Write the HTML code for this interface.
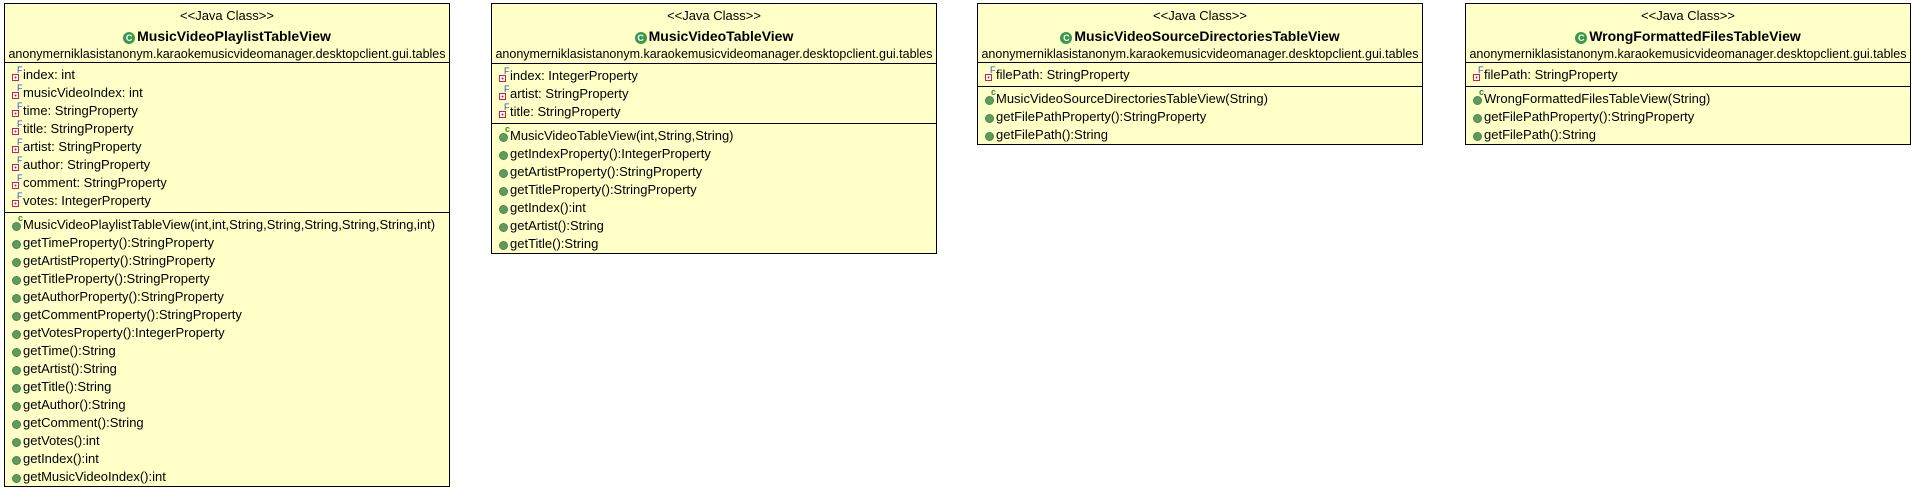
<!DOCTYPE html>
<html><head><meta charset="utf-8">
<style>
*{margin:0;padding:0;box-sizing:border-box}
body{width:1914px;height:490px;background:#fff;position:relative;overflow:hidden;font-family:"Liberation Sans",Arial,sans-serif;color:#000}
.box{position:absolute;background:#FFFFC8;border:1px solid #000;width:446px}
.hdr{height:59px;border-bottom:1px solid #000;text-align:center;position:relative}
.st{position:absolute;left:0;right:0;top:4px;font-size:13px;line-height:16px}
.nm{position:absolute;left:0;right:0;top:23px;font-size:14px;font-weight:bold;line-height:18px}
.pk{position:absolute;left:0;right:0;top:42px;font-size:12.5px;line-height:16px;white-space:nowrap}
.cmp{padding:3px 0 2px 0;border-bottom:1px solid #000}
.cmp:last-child{border-bottom:none}
.r{height:18px;line-height:18px;font-size:13px;padding-left:18px;position:relative;white-space:nowrap}
.f::before{content:"";position:absolute;left:7px;top:8px;width:5px;height:5px;border:1px solid #d02040;background:radial-gradient(circle,#d02040 0 1px,#fff 1px)}
.f::after{content:"F";position:absolute;left:12px;top:-5px;font-size:9px;color:#2a4fc0}
.m::before{content:"";position:absolute;left:7px;top:6px;width:7px;height:7px;border-radius:50%;background:#5f9a5f;border:1px solid #4b874b}
.c::after{content:"c";position:absolute;left:13px;top:-7px;font-size:9px;font-weight:bold;color:#2e8b2e}
.ci{display:inline-block;width:12px;height:12px;border-radius:50%;background:#3a9a4a;color:#fff;font-size:9px;line-height:12px;text-align:center;vertical-align:0px;margin-right:2px;font-weight:bold}
</style></head><body>

<div class="box" style="left:4px;top:3px;height:484px">
 <div class="hdr"><div class="st">&lt;&lt;Java Class&gt;&gt;</div><div class="nm"><span class="ci">C</span>MusicVideoPlaylistTableView</div><div class="pk">anonymerniklasistanonym.karaokemusicvideomanager.desktopclient.gui.tables</div></div>
 <div class="cmp">
  <div class="r f">index: int</div><div class="r f">musicVideoIndex: int</div><div class="r f">time: StringProperty</div><div class="r f">title: StringProperty</div><div class="r f">artist: StringProperty</div><div class="r f">author: StringProperty</div><div class="r f">comment: StringProperty</div><div class="r f">votes: IntegerProperty</div>
 </div>
 <div class="cmp">
  <div class="r m c">MusicVideoPlaylistTableView(int,int,String,String,String,String,String,int)</div>
  <div class="r m">getTimeProperty():StringProperty</div><div class="r m">getArtistProperty():StringProperty</div><div class="r m">getTitleProperty():StringProperty</div><div class="r m">getAuthorProperty():StringProperty</div><div class="r m">getCommentProperty():StringProperty</div><div class="r m">getVotesProperty():IntegerProperty</div><div class="r m">getTime():String</div><div class="r m">getArtist():String</div><div class="r m">getTitle():String</div><div class="r m">getAuthor():String</div><div class="r m">getComment():String</div><div class="r m">getVotes():int</div><div class="r m">getIndex():int</div><div class="r m">getMusicVideoIndex():int</div>
 </div>
</div>

<div class="box" style="left:491px;top:3px;height:251px">
 <div class="hdr" style="height:60px"><div class="st">&lt;&lt;Java Class&gt;&gt;</div><div class="nm"><span class="ci">C</span>MusicVideoTableView</div><div class="pk">anonymerniklasistanonym.karaokemusicvideomanager.desktopclient.gui.tables</div></div>
 <div class="cmp">
  <div class="r f">index: IntegerProperty</div><div class="r f">artist: StringProperty</div><div class="r f">title: StringProperty</div>
 </div>
 <div class="cmp">
  <div class="r m c">MusicVideoTableView(int,String,String)</div>
  <div class="r m">getIndexProperty():IntegerProperty</div><div class="r m">getArtistProperty():StringProperty</div><div class="r m">getTitleProperty():StringProperty</div><div class="r m">getIndex():int</div><div class="r m">getArtist():String</div><div class="r m">getTitle():String</div>
 </div>
</div>

<div class="box" style="left:977px;top:3px;height:142px">
 <div class="hdr"><div class="st">&lt;&lt;Java Class&gt;&gt;</div><div class="nm"><span class="ci">C</span>MusicVideoSourceDirectoriesTableView</div><div class="pk">anonymerniklasistanonym.karaokemusicvideomanager.desktopclient.gui.tables</div></div>
 <div class="cmp"><div class="r f">filePath: StringProperty</div></div>
 <div class="cmp">
  <div class="r m c">MusicVideoSourceDirectoriesTableView(String)</div>
  <div class="r m">getFilePathProperty():StringProperty</div><div class="r m">getFilePath():String</div>
 </div>
</div>

<div class="box" style="left:1465px;top:3px;height:142px">
 <div class="hdr"><div class="st">&lt;&lt;Java Class&gt;&gt;</div><div class="nm"><span class="ci">C</span>WrongFormattedFilesTableView</div><div class="pk">anonymerniklasistanonym.karaokemusicvideomanager.desktopclient.gui.tables</div></div>
 <div class="cmp"><div class="r f">filePath: StringProperty</div></div>
 <div class="cmp">
  <div class="r m c">WrongFormattedFilesTableView(String)</div>
  <div class="r m">getFilePathProperty():StringProperty</div><div class="r m">getFilePath():String</div>
 </div>
</div>

</body></html>
